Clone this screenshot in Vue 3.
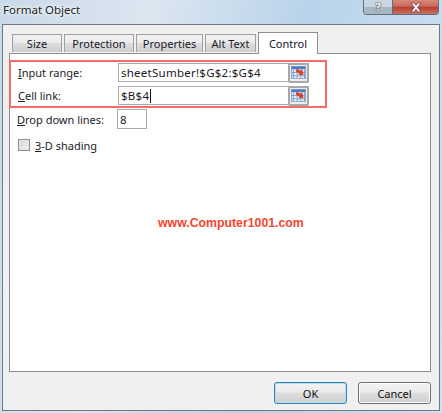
<script setup>
const tabs = [
  { label: 'Size', w: 50 },
  { label: 'Protection', w: 70 },
  { label: 'Properties', w: 67 },
  { label: 'Alt Text', w: 51 },
]
const cols = [0, 1, 2, 3]
</script>

<template>
  <div class="window">
    <header class="titlebar">
      <span class="title">Format Object</span>
      <div class="controls">
        <div class="help">?</div>
        <div class="close">
          <svg width="14" height="11" viewBox="0 0 14 11">
            <path d="M2 1h3l2 2.400L9 1h3L8.600 5.400 12 10H9L7 7.400 5 10H2l3.400-4.600z" fill="#fff" stroke="#5c3a36" stroke-width=".7" />
          </svg>
        </div>
      </div>
    </header>
    <main class="body">
      <nav class="tabs">
        <div v-for="t in tabs" :key="t.label" class="tab" :style="{ width: t.w + 'px' }">{{ t.label }}</div>
        <div class="tab active">Control</div>
      </nav>
      <section class="panel">
        <div class="redbox">
          <div class="row">
            <label class="label"><u>I</u>nput range:</label>
            <div class="field wide">
              <span>sheetSumber!$G$2:$G$4</span>
              <button class="pick">
                <svg width="15" height="13" viewBox="0 0 16 14">
                  <rect x=".5" y=".5" width="15" height="13" fill="#e6eefa" stroke="#8aa6d0" />
                  <rect x=".5" y=".5" width="15" height="3" fill="#4f7cc0" />
                  <path v-for="c in cols" :key="c" :d="`M${c * 4 + 2.500} 4v9`" stroke="#7f9ccb" />
                  <path d="M1 7h14M1 10.500h14" stroke="#7f9ccb" />
                  <path d="M6 3l4.500 2 1.500-1.500 1.500 6-5.500.5 1.300-1.500L5 6z" fill="#d8402c" />
                </svg>
              </button>
            </div>
          </div>
          <div class="row">
            <label class="label"><u>C</u>ell link:</label>
            <div class="field wide">
              <span class="caret">$B$4</span>
              <button class="pick">
                <svg width="15" height="13" viewBox="0 0 16 14">
                  <rect x=".5" y=".5" width="15" height="13" fill="#e6eefa" stroke="#8aa6d0" />
                  <rect x=".5" y=".5" width="15" height="3" fill="#4f7cc0" />
                  <path v-for="c in cols" :key="c" :d="`M${c * 4 + 2.500} 4v9`" stroke="#7f9ccb" />
                  <path d="M1 7h14M1 10.500h14" stroke="#7f9ccb" />
                  <path d="M6 3l4.500 2 1.500-1.500 1.500 6-5.500.5 1.300-1.500L5 6z" fill="#d8402c" />
                </svg>
              </button>
            </div>
          </div>
        </div>
        <div class="row lines">
          <label class="label"><u>D</u>rop down lines:</label>
          <div class="field small"><span>8</span></div>
        </div>
        <div class="check">
          <span class="box"></span>
          <span><u>3</u>-D shading</span>
        </div>
        <div class="watermark">www.Computer1001.com</div>
      </section>
      <footer class="actions">
        <button class="btn default">OK</button>
        <button class="btn">Cancel</button>
      </footer>
    </main>
  </div>
</template>

<style>
html, body { margin: 0; padding: 0; }
</style>

<style scoped>
.window {
  width: 442px;
  height: 413px;
  box-sizing: border-box;
  overflow: hidden;
  display: flex;
  flex-direction: column;
  font-family: "Noto Sans", "Open Sans", sans-serif;
  font-size: 11px;
  color: #1a1a2a;
  background: linear-gradient(100deg, #c9d9e8 0%, #dbe6f0 30%, #b9d3ea 60%, #cfe1f2 100%);
  padding: 0 2px 2px 2px;
}
.titlebar {
  height: 24px;
  flex: none;
  display: flex;
  justify-content: space-between;
  align-items: flex-start;
}
.title {
  font-size: 11.500px;
  line-height: 20px;
  margin-left: 1px;
  color: #222;
  text-shadow: 0 0 6px #fff, 0 0 3px #fff;
}
.controls {
  display: flex;
  height: 14px;
  margin-right: 1px;
  border: 1px solid #5f6f80;
  border-top: 0;
  border-radius: 0 0 4px 4px;
}
.help {
  width: 28px;
  height: 14px;
  background: linear-gradient(#c9d6e2 50%, #a9b7c4 50%);
  border-right: 1px solid #5f6f80;
  border-radius: 0 0 0 3px;
  text-align: center;
  font-weight: 700;
  font-size: 11px;
  line-height: 14px;
  color: #fff;
  text-shadow: 0 0 1px #333, 0 0 2px #333;
}
.close {
  width: 45px;
  display: flex;
  align-items: center;
  justify-content: center;
  border-radius: 0 0 3px 0;
  background: linear-gradient(#d8897c 0, #c86a5c 45%, #b83c2c 50%, #cc7060 100%);
}
.body {
  flex: 1;
  display: flex;
  flex-direction: column;
  background: #f0f0f0;
  border: 1px solid #6f7780;
  padding: 7px 8px 0 6px;
  min-height: 0;
}
.tabs {
  display: flex;
  gap: 2px;
  height: 21px;
  align-items: flex-end;
  padding-left: 3px;
  flex: none;
  position: relative;
  z-index: 1;
}
.tab {
  box-sizing: border-box;
  height: 18px;
  margin-bottom: 1px;
  text-align: center;
  line-height: 18px;
  border: 1px solid #a0a0a0;
  border-bottom: 0;
  background: linear-gradient(#f2f2f2 0, #ebebeb 45%, #dcdcdc 50%, #cfcfcf 100%);
}
.tab.active {
  width: 60px;
  height: 22px;
  margin-bottom: -1px;
  line-height: 21px;
  background: #fff;
  border-color: #8e8e98;
  color: #101030;
}
.panel {
  flex: none;
  height: 319px;
  box-sizing: border-box;
  background: #fff;
  border: 1px solid #8c8c94;
  padding: 6px 0 0 0;
  display: flex;
  flex-direction: column;
}
.redbox {
  box-sizing: content-box;
  width: 314px;
  height: 44px;
  border: 2px solid #f76b6d;
  padding: 0;
  display: flex;
  flex-direction: column;
  justify-content: center;
  gap: 3px;
  margin-left: -1px;
}
.row {
  display: flex;
  align-items: center;
  height: 20px;
}
.label {
  width: 107px;
  padding-left: 7px;
  flex: none;
  box-sizing: border-box;
}
.field {
  box-sizing: border-box;
  height: 20px;
  border: 1px solid #ababab;
  background: #fff;
  display: flex;
  align-items: center;
  justify-content: space-between;
  padding-left: 2px;
  font-size: 11.500px;
  letter-spacing: 0.25px;
}
.field.wide { width: 191px; border-right: 0; height: 19px; }
.field.small { width: 30px; }
.caret {
  border-right: 1px solid #111;
  padding-right: 1px;
  line-height: 14px;
}
.pick {
  box-sizing: border-box;
  width: 21px;
  height: 20px;
  padding: 0;
  margin: 0;
  border: 2px solid #a8a8a8;
  border-radius: 2px;
  background: #eee;
  display: flex;
  align-items: center;
  justify-content: center;
  flex: none;
}
.lines {
  margin-top: 1px;
  padding-left: 0;
}
.check {
  display: flex;
  align-items: center;
  gap: 5px;
  margin: 9px 0 0 9px;
  height: 14px;
}
.box {
  width: 10px;
  height: 10px;
  margin-left: -1px;
  border: 1px solid #8e8f8f;
  background: linear-gradient(135deg, #d4d4d4, #f4f4f4);
  box-shadow: inset 0 0 0 1px #e4e4e4;
}
.watermark {
  margin-top: 63px;
  margin-left: 148px;
  color: #f3452f;
  font-family: "Liberation Sans", Arial, sans-serif;
  font-weight: 700;
  font-size: 12.300px;
  line-height: 16px;
}
.actions {
  display: flex;
  justify-content: flex-end;
  gap: 11px;
  padding-top: 10px;
}
.btn {
  box-sizing: border-box;
  width: 73px;
  height: 22px;
  padding: 0;
  font: inherit;
  color: #111;
  border: 1px solid #707070;
  border-radius: 3px;
  background: linear-gradient(#f2f2f2 0, #ebebeb 45%, #dddddd 50%, #cfcfcf 100%);
  box-shadow: inset 0 0 0 1px #fbfbfb;
}
.btn.default {
  border-color: #3c7fb1;
  box-shadow: inset 0 0 0 1px #a9e4f6;
}
</style>
